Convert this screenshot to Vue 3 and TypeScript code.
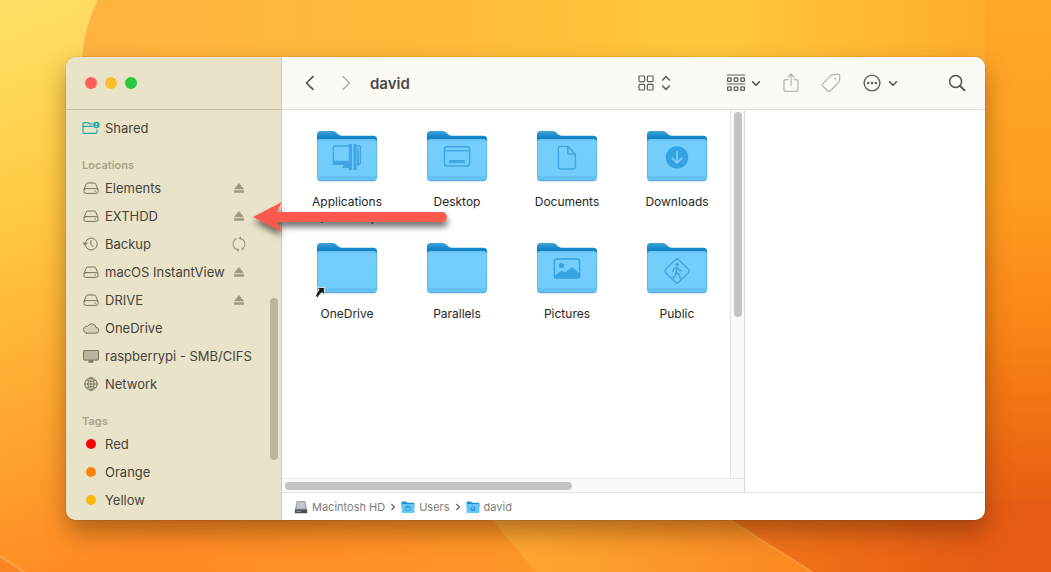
<script setup lang="ts">
interface Place {
  name: string
  icon: 'drive' | 'clock' | 'cloud' | 'display' | 'globe'
  action?: 'eject' | 'sync'
}
interface Tag {
  name: string
  tone: string
}
interface Folder {
  name: string
  note?: string
  glyph: string
}
interface Crumb {
  name: string
  icon: 'disk' | 'users' | 'home'
}

const places: Place[] = [
  { name: 'Elements', icon: 'drive', action: 'eject' },
  { name: 'EXTHDD', icon: 'drive', action: 'eject' },
  { name: 'Backup', icon: 'clock', action: 'sync' },
  { name: 'macOS InstantView', icon: 'drive', action: 'eject' },
  { name: 'DRIVE', icon: 'drive', action: 'eject' },
  { name: 'OneDrive', icon: 'cloud' },
  { name: 'raspberrypi - SMB/CIFS', icon: 'display' },
  { name: 'Network', icon: 'globe' },
]

const tags: Tag[] = [
  { name: 'Red', tone: 'red' },
  { name: 'Orange', tone: 'orange' },
  { name: 'Yellow', tone: 'yellow' },
]

const folders: Folder[] = [
  { name: 'Applications', note: '(Parallels)', glyph: 'apps' },
  { name: 'Desktop', glyph: 'desktop' },
  { name: 'Documents', glyph: 'document' },
  { name: 'Downloads', glyph: 'download' },
  { name: 'OneDrive', glyph: 'alias' },
  { name: 'Parallels', glyph: 'plain' },
  { name: 'Pictures', glyph: 'picture' },
  { name: 'Public', glyph: 'public' },
]

const crumbs: Crumb[] = [
  { name: 'Macintosh HD', icon: 'disk' },
  { name: 'Users', icon: 'users' },
  { name: 'david', icon: 'home' },
]
</script>

<template>
  <div class="screen">
    <svg class="wallpaper" viewBox="0 0 1051 572" preserveAspectRatio="none" aria-hidden="true">
      <defs>
        <linearGradient id="wp-left" x1="0" y1="0" x2="0.25" y2="1">
          <stop offset="0" stop-color="#ffe168" />
          <stop offset="0.35" stop-color="#ffcb43" />
          <stop offset="0.7" stop-color="#ffa730" />
          <stop offset="1" stop-color="#ff8a24" />
        </linearGradient>
        <linearGradient id="wp-inner" x1="0" y1="0" x2="1" y2="0">
          <stop offset="0" stop-color="#ffb142" />
          <stop offset="0.4" stop-color="#ffba39" />
          <stop offset="0.68" stop-color="#ffc83c" />
          <stop offset="1" stop-color="#ffa628" />
        </linearGradient>
        <linearGradient id="wp-right" x1="0" y1="0" x2="0" y2="1">
          <stop offset="0" stop-color="#ffa829" />
          <stop offset="0.35" stop-color="#ff9d20" />
          <stop offset="0.6" stop-color="#f88215" />
          <stop offset="0.85" stop-color="#e96114" />
          <stop offset="1" stop-color="#e55b14" />
        </linearGradient>
        <linearGradient id="wp-floor" x1="0" y1="0" x2="1" y2="0">
          <stop offset="0" stop-color="#ff8d25" stop-opacity="0" />
          <stop offset="0.3" stop-color="#ff8d25" />
          <stop offset="1" stop-color="#ff9729" />
        </linearGradient>
        <linearGradient id="wp-band" x1="0" y1="0" x2="1" y2="0">
          <stop offset="0" stop-color="#ffab34" />
          <stop offset="1" stop-color="#fb8822" />
        </linearGradient>
        <linearGradient id="wp-deep" x1="0" y1="0" x2="1" y2="0">
          <stop offset="0" stop-color="#f57c1c" />
          <stop offset="0.8" stop-color="#e65c14" />
          <stop offset="1" stop-color="#e65c14" />
        </linearGradient>
      </defs>
      <rect width="1051" height="572" fill="url(#wp-inner)" />
      <path d="M0 0H97C84 26 80 48 81 80C82 200 120 390 370 572H0Z" fill="url(#wp-left)" />
      <path d="M97 0C84 26 80 48 81 80" fill="none" stroke="#ffd36a" stroke-width="2" />
      <rect x="985" width="66" height="572" fill="url(#wp-right)" />
      <path d="M66 500H480L540 572H66Z" fill="url(#wp-floor)" />
      <path d="M475 500H710L812 572H536Z" fill="url(#wp-band)" />
      <path d="M698 500H1051V572H812Z" fill="url(#wp-deep)" />
      <path d="M698 500L812 572" stroke="#fb9a38" stroke-width="2" />
      <path d="M0 556L24 572H0Z" fill="#f98424" />
      <path d="M0 556L24 572" stroke="#ffa94e" stroke-width="2" />
    </svg>

    <main class="window">
      <aside class="sidebar">
        <div class="lights">
          <button class="light close" aria-label="Close"></button>
          <button class="light minimize" aria-label="Minimize"></button>
          <button class="light zoom" aria-label="Zoom"></button>
        </div>
        <nav class="places" aria-label="Sidebar">
          <a class="place" href="#shared">
            <svg class="place-icon" viewBox="0 0 18 16" fill="none" stroke="#1fa9a4" stroke-width="1.2">
              <path d="M11 4H7.4L6.2 2.6H2.2Q1 2.6 1 3.8V12Q1 13.4 2.4 13.4H13.6Q15 13.4 15 12V9.6M1 6.4H10.8" />
              <circle cx="14.4" cy="5" r="3.2" fill="#1fa9a4" stroke="none" />
              <circle cx="14.4" cy="4.2" r="1" fill="#e9e3ca" stroke="none" />
              <path d="M12.8 7Q14.4 4.9 16 7Z" fill="#e9e3ca" stroke="none" />
            </svg>
            <span>Shared</span>
          </a>
          <h2 class="heading">Locations</h2>
          <div v-for="place in places" :key="place.name" class="row">
            <a class="place" :href="'#' + place.icon">
              <svg class="place-icon" viewBox="0 0 18 16" fill="none" stroke="#77735f" stroke-width="1" stroke-linejoin="round" stroke-linecap="round">
                <template v-if="place.icon === 'drive'">
                  <path d="M2 9.4L4.3 4Q4.7 3 5.8 3H12.2Q13.3 3 13.7 4L16 9.4" />
                  <rect x="2" y="8.6" width="14" height="4.8" rx="1.8" />
                  <path d="M12.8 11H13.6" stroke-width="1.2" />
                </template>
                <template v-else-if="place.icon === 'clock'">
                  <path d="M3.4 9.6A6 6 0 1 0 3.5 6.1" />
                  <path d="M1.2 7.2L3.2 9.4L5.1 7.2Z" fill="#77735f" stroke-width="0.6" />
                  <path d="M9 4.6V8.4L11 10.6" />
                </template>
                <path v-else-if="place.icon === 'cloud'" d="M4.6 13.2H13.6A2.9 2.9 0 0 0 14 7.4A4.4 4.4 0 0 0 5.8 6.2A3.5 3.5 0 0 0 4.6 13.2Z" fill="#d5cfb8" />
                <template v-else-if="place.icon === 'display'">
                  <rect x="1.5" y="2.5" width="15" height="9.6" rx="0.8" fill="#b9b49f" />
                  <path d="M7 12.4H11V14.4H7Z" fill="#77735f" stroke-width="0.6" />
                </template>
                <template v-else>
                  <circle cx="9" cy="8" r="6.2" />
                  <ellipse cx="9" cy="8" rx="3" ry="6.2" />
                  <path d="M9 1.8V14.2M2.8 8H15.2M4.2 4.4Q9 7 13.8 4.4M4.2 11.6Q9 9 13.8 11.6" stroke-width="0.9" />
                </template>
              </svg>
              <span>{{ place.name }}</span>
            </a>
            <button v-if="place.action" class="action" :aria-label="place.action + ' ' + place.name">
              <svg v-if="place.action === 'eject'" viewBox="0 0 16 16" fill="#9f9a7e">
                <path d="M8 3L13 9.2H3Z" />
                <rect x="3" y="10.2" width="10" height="2.6" rx="0.3" />
              </svg>
              <svg v-else viewBox="0 0 16 16" fill="none" stroke="#9f9a7e" stroke-width="1.1">
                <path d="M6.6 13.8A6 6 0 0 1 4.2 3.4M9.4 2.2A6 6 0 0 1 11.8 12.6" />
                <path d="M6.2 12L8.6 14L6 15.8ZM9.8 4L7.4 2L10 0.2Z" fill="#9f9a7e" stroke="none" />
                <path d="M3 2.6L5.6 2.2L5 4.8ZM13 13.4L10.4 13.8L11 11.2Z" fill="#9f9a7e" stroke="none" />
              </svg>
            </button>
          </div>
          <h2 class="heading">Tags</h2>
          <a v-for="tag in tags" :key="tag.name" class="place" :href="'#' + tag.tone">
            <span class="dot" :class="tag.tone"></span>
            <span>{{ tag.name }}</span>
          </a>
        </nav>
        <div class="side-thumb"></div>
      </aside>

      <section class="content">
        <header class="toolbar">
          <button class="tool" aria-label="Back">
            <svg class="i16" viewBox="0 0 16 18" fill="none" stroke="#4d4b48" stroke-width="1.5" stroke-linecap="round" stroke-linejoin="round"><path d="M11 2.6L4.4 9L11 15.4" /></svg>
          </button>
          <button class="tool forward" aria-label="Forward">
            <svg class="i16" viewBox="0 0 16 18" fill="none" stroke="#b7b4b0" stroke-width="1.5" stroke-linecap="round" stroke-linejoin="round"><path d="M5 2.6L11.6 9L5 15.4" /></svg>
          </button>
          <h1 class="title">david</h1>
          <button class="tool view" aria-label="View as icons">
            <svg class="i16" viewBox="0 0 16 18" fill="none" stroke="#63605c" stroke-width="1.2">
              <rect x="1" y="2" width="5.6" height="5.6" rx="0.8" /><rect x="9.4" y="2" width="5.6" height="5.6" rx="0.8" />
              <rect x="1" y="10.4" width="5.6" height="5.6" rx="0.8" /><rect x="9.4" y="10.4" width="5.6" height="5.6" rx="0.8" />
            </svg>
            <svg class="i10" viewBox="0 0 10 18" fill="none" stroke="#63605c" stroke-width="1.6" stroke-linecap="round" stroke-linejoin="round"><path d="M1.6 6L5 2.6L8.4 6M1.6 12L5 15.4L8.4 12" /></svg>
          </button>
          <button class="tool group" aria-label="Group items">
            <svg class="i20" viewBox="0 0 20 18" fill="none" stroke="#63605c" stroke-width="1.3">
              <path d="M1 1H19M1 10H19" stroke-width="1.2" />
              <rect x="1.6" y="3.8" width="3.6" height="3.6" rx="0.6" /><rect x="8.2" y="3.8" width="3.6" height="3.6" rx="0.6" /><rect x="14.8" y="3.8" width="3.6" height="3.6" rx="0.6" />
              <rect x="1.6" y="12.8" width="3.6" height="3.6" rx="0.6" /><rect x="8.2" y="12.8" width="3.6" height="3.6" rx="0.6" /><rect x="14.8" y="12.8" width="3.6" height="3.6" rx="0.6" />
            </svg>
            <svg class="i10" viewBox="0 0 10 18" fill="none" stroke="#56534f" stroke-width="1.6" stroke-linecap="round" stroke-linejoin="round"><path d="M1.6 7.8L5 11.2L8.4 7.8" /></svg>
          </button>
          <button class="tool share" aria-label="Share">
            <svg class="i16" viewBox="0 0 16 20" fill="none" stroke="#bab7b3" stroke-width="1.3" stroke-linecap="round" stroke-linejoin="round"><path d="M5 6.6H2.4Q1 6.6 1 8V17Q1 18.4 2.4 18.4H13.6Q15 18.4 15 17V8Q15 6.6 13.6 6.6H11M8 12.6V1M5 4L8 1L11 4" /></svg>
          </button>
          <button class="tool tag" aria-label="Edit tags">
            <svg class="i20" viewBox="0 0 20 20" fill="none" stroke="#bab7b3" stroke-width="1.3" stroke-linejoin="round">
              <path d="M11.4 2L16.6 1.2Q18.6 1 18.7 3L18.6 7.4Q18.5 8.6 17.7 9.4L9.2 18Q8 19.2 6.8 18L1.9 13Q0.7 11.8 1.9 10.6L9.6 2.9Q10.4 2.1 11.4 2Z" />
              <circle cx="14.4" cy="5.8" r="1" fill="#bab7b3" stroke="none" />
            </svg>
          </button>
          <button class="tool more" aria-label="More actions">
            <svg class="i18" viewBox="0 0 18 18" fill="none" stroke="#63605c" stroke-width="1.4">
              <circle cx="9" cy="9" r="7.9" />
              <g fill="#56534f" stroke="none"><circle cx="5.2" cy="9" r="1.2" /><circle cx="9" cy="9" r="1.2" /><circle cx="12.8" cy="9" r="1.2" /></g>
            </svg>
            <svg class="i10" viewBox="0 0 10 18" fill="none" stroke="#56534f" stroke-width="1.6" stroke-linecap="round" stroke-linejoin="round"><path d="M1.6 7.8L5 11.2L8.4 7.8" /></svg>
          </button>
          <button class="tool search" aria-label="Search">
            <svg class="i18" viewBox="0 0 18 18" fill="none" stroke="#56534f" stroke-width="1.5" stroke-linecap="round"><circle cx="7.6" cy="7.4" r="6" /><path d="M12.2 12L16.6 16.4" stroke-width="1.9" /></svg>
          </button>
        </header>

        <div class="columns">
          <div class="browser">
            <div class="files">
              <a v-for="(folder, index) in folders" :key="index" class="folder" href="#folder">
                <svg class="folder-art" viewBox="0 0 64 56">
                  <defs>
                    <linearGradient :id="'back' + index" x1="0" y1="0" x2="0" y2="1">
                      <stop offset="0" stop-color="#3fa5dc" />
                      <stop offset="0.35" stop-color="#0f83c4" />
                    </linearGradient>
                    <linearGradient :id="'front' + index" x1="0" y1="0" x2="0" y2="1">
                      <stop offset="0" stop-color="#6ac5f7" />
                      <stop offset="0.1" stop-color="#74cffc" />
                      <stop offset="0.88" stop-color="#72cdfb" />
                      <stop offset="0.9" stop-color="#5fbdf0" />
                      <stop offset="0.96" stop-color="#68c4f4" />
                      <stop offset="1" stop-color="#4ba6da" />
                    </linearGradient>
                  </defs>
                  <path d="M2.5 48V12H61.5V48Q61.5 51.6 58 51.6H6Q2.5 51.6 2.5 48Z" fill="#9eb3c0" opacity="0.6" />
                  <path d="M2 14V4.6Q2 1 5.6 1H17.4Q19.6 1 21.2 2.4L23.4 4.4Q25 5.8 27.4 5.8H58.4Q62 5.8 62 9.4V20H2Z" :fill="`url(#back${index})`" />
                  <path d="M2 12.6Q2 9 5.6 9H58.4Q62 9 62 12.6V47.4Q62 51 58.4 51H5.6Q2 51 2 47.4Z" :fill="`url(#front${index})`" />
                  <path d="M2.5 12V47.4M61.5 12V47.4" stroke="#55b5eb" opacity="0.7" />
                  <g v-if="folder.glyph === 'apps'" fill="none" stroke="#41a6e1" stroke-width="1.4">
                    <path d="M34 34H19.4Q18.4 34 18.4 33V17Q18.4 16 19.4 16H34M41 16H44.4Q45.4 16 45.4 17V33Q45.4 34 44.4 34H42" />
                    <path d="M18.4 31.4H34V34H18.4Z" fill="#41a6e1" />
                    <path d="M29.5 34L27 38H37V34Z" fill="#41a6e1" stroke="none" />
                    <path d="M35.4 14V40M40 14V40" stroke-width="3.2" />
                    <path d="M43 18V36" stroke-width="1.6" />
                  </g>
                  <g v-else-if="folder.glyph === 'desktop'" fill="none" stroke="#41a6e1" stroke-width="1.4">
                    <rect x="19.4" y="16.8" width="25.2" height="19.2" rx="2.4" />
                    <path d="M19.4 20.8H44.6" />
                    <path d="M24 31.6H40" stroke-width="3" />
                  </g>
                  <g v-else-if="folder.glyph === 'document'" fill="none" stroke="#41a6e1" stroke-width="1.4" stroke-linejoin="round">
                    <path d="M25.4 16.4H32.8L40.4 24V36.8Q40.4 39 38.2 39H25.4Q23.4 39 23.4 36.8V18.4Q23.4 16.4 25.4 16.4Z" />
                    <path d="M32.8 16.4V22.4Q32.8 24 34.4 24H40.4" />
                  </g>
                  <g v-else-if="folder.glyph === 'download'">
                    <circle cx="32" cy="27.4" r="11.2" fill="#35a2e1" />
                    <path d="M32 21.6V32.6M27.4 28.4L32 33L36.6 28.4" fill="none" stroke="#83d3fa" stroke-width="1.5" stroke-linecap="round" />
                  </g>
                  <g v-else-if="folder.glyph === 'picture'">
                    <rect x="19.4" y="17" width="25.2" height="19" rx="2.2" fill="none" stroke="#35a2e1" stroke-width="1.4" />
                    <circle cx="26.6" cy="23.6" r="2.6" fill="#35a2e1" />
                    <path d="M20 33.4L27 28.4L30 30.4L37 25L44.4 31.6V35.6H20Z" fill="#35a2e1" />
                  </g>
                  <g v-else-if="folder.glyph === 'public'" fill="none" stroke="#41a6e1" stroke-width="1.4" stroke-linecap="round" stroke-linejoin="round">
                    <path d="M30.6 17.4Q32 16.2 33.4 17.4L43.6 27.6Q44.8 29 43.6 30.4L33.4 40.6Q32 41.8 30.6 40.6L20.4 30.4Q19.2 29 20.4 27.6Z" />
                    <circle cx="32.2" cy="22.6" r="1.4" fill="#41a6e1" stroke-width="0.6" />
                    <path d="M32 25.4L31.2 30L34.2 32.6L35.4 36.2M31.2 30L30.4 33.2L28 36.2M31.8 25.4L28.8 26.8L28 29.4M32.4 25.6L34.2 28.2L36.6 28.8" />
                  </g>
                  <g v-else-if="folder.glyph === 'alias'">
                    <path d="M2 45.4H9.4V52.8L7 50.6Q4 52.6 2.8 55.6L0.6 54.2Q1.6 50.2 4.2 47.8Z" fill="#171717" stroke="#fff" stroke-width="0.8" />
                  </g>
                </svg>
                <span class="label">{{ folder.name }}<br v-if="folder.note" />{{ folder.note }}</span>
              </a>
            </div>
            <div class="v-track"><div class="v-thumb"></div></div>
            <div class="h-track"><div class="h-thumb"></div></div>
          </div>
          <div class="preview"></div>
        </div>

        <footer class="pathbar">
          <template v-for="(crumb, index) in crumbs" :key="crumb.name">
            <svg v-if="index > 0" class="sep" viewBox="0 0 6 8" fill="none" stroke="#6f6f6f" stroke-width="1.4"><path d="M1.4 1L4.4 4L1.4 7" /></svg>
            <a class="crumb" href="#path">
              <svg class="crumb-icon" viewBox="0 0 14 14">
                <template v-if="crumb.icon === 'disk'">
                  <path d="M2.6 1H11.4L13.2 10H0.8Z" fill="#a2a9ad" />
                  <path d="M3.6 2H10.4L11.2 8.4H2.8Z" fill="#c0c8cd" />
                  <rect x="0.8" y="9.6" width="12.4" height="3.6" rx="0.8" fill="#4c4f52" />
                  <path d="M2.4 11.4H7" stroke="#8f9598" />
                </template>
                <template v-else>
                  <path d="M0.6 2.4Q0.6 1.6 1.4 1.6H5L6.2 2.8H12.6Q13.4 2.8 13.4 3.6V7H0.6Z" fill="#1d8fce" />
                  <rect x="0.6" y="4" width="12.8" height="9" rx="0.8" fill="#66c6f7" />
                  <g v-if="crumb.icon === 'users'" fill="none" stroke="#2e95d2" stroke-width="0.9"><circle cx="7" cy="8.2" r="2.5" /><circle cx="7" cy="7.6" r="0.6" /></g>
                  <path v-else d="M4.6 8.2L7 6L9.4 8.2M5.4 8V10.6H6.4V9H7.6V10.6H8.6V8" fill="none" stroke="#2e95d2" stroke-width="0.9" />
                </template>
              </svg>
              <span>{{ crumb.name }}</span>
            </a>
          </template>
        </footer>
      </section>

      <svg class="pointer" viewBox="0 0 206 44" aria-hidden="true">
        <path d="M2 18L31 3Q28 8 26 13H191A5 5 0 0 1 191 23H26Q28 28 31 33Z" fill="#fb5a4d" />
      </svg>
    </main>
  </div>
</template>

<style>
html,
body,
#app {
  height: 100%;
}
</style>

<style scoped>
.screen {
  position: relative;
  display: flex;
  box-sizing: border-box;
  min-height: 100%;
  padding: 57px 66px 52px;
  overflow: hidden;
  font-family: Inter, "Liberation Sans", sans-serif;
  font-size: 13px;
  color: #46433a;
}
.wallpaper {
  position: absolute;
  inset: 0;
  width: 100%;
  height: 100%;
}
.window {
  position: relative;
  display: flex;
  flex: 1;
  min-width: 0;
  border-radius: 10px;
  background: #fff;
  box-shadow: 0 0 1px rgba(70, 40, 0, 0.7), 0 12px 24px rgba(70, 30, 0, 0.42);
}
a {
  color: inherit;
  text-decoration: none;
}
button {
  padding: 0;
  border: 0;
  background: none;
  font: inherit;
}
svg {
  display: block;
}
.sidebar {
  position: relative;
  flex: 0 0 216px;
  box-sizing: border-box;
  min-width: 0;
  border-right: 1px solid #d3ccb2;
  border-radius: 10px 0 0 10px;
  background: #e9e3ca;
}
.lights {
  display: flex;
  align-items: center;
  gap: 8px;
  height: 52px;
  padding-left: 19px;
  border-bottom: 1px solid #cbc5ae;
}
.light {
  width: 12px;
  height: 12px;
  border-radius: 50%;
}
.close {
  background: #ff5f57;
}
.minimize {
  background: #febc2e;
}
.zoom {
  background: #28c840;
}
.places {
  padding: 4px 20px 6px 16px;
}
.row {
  display: flex;
  align-items: center;
  justify-content: space-between;
  padding-right: 14px;
}
.place {
  display: flex;
  align-items: center;
  gap: 5px;
  height: 28px;
  white-space: nowrap;
}
.place-icon {
  flex: none;
  width: 18px;
  height: 16px;
}
.heading {
  margin: 0;
  padding-top: 14px;
  font-size: 11px;
  font-weight: 600;
  line-height: 18px;
  color: #aaa487;
}
.action svg {
  width: 16px;
  height: 16px;
}
.dot {
  width: 10px;
  height: 10px;
  margin: 0 4px;
  border-radius: 50%;
}
.red {
  background: #fb0007;
}
.orange {
  background: #fd8208;
}
.yellow {
  background: #f5b90c;
}
.side-thumb {
  position: absolute;
  right: 3px;
  bottom: 60px;
  width: 8px;
  height: 35%;
  border-radius: 4px;
  background: #bbb5a0;
}
.content {
  display: flex;
  flex: 1;
  flex-direction: column;
  min-width: 0;
}
.toolbar {
  display: flex;
  align-items: center;
  height: 52px;
  padding: 0 19px 0 20px;
  border-bottom: 1px solid #e3e0dd;
  border-radius: 0 10px 0 0;
  background: #fdf9f4;
}
.tool {
  display: flex;
  align-items: center;
}
.forward {
  margin-left: 20px;
}
.title {
  flex: 1;
  margin: 0 0 0 16px;
  font-size: 15px;
  font-weight: 600;
  color: #4a4846;
}
.view,
.more {
  gap: 7px;
}
.group {
  gap: 5px;
  margin-left: 55px;
}
.share,
.tag,
.more {
  margin-left: 22px;
}
.search {
  margin-left: 50px;
}
.i10 {
  width: 10px;
  height: 18px;
}
.i16 {
  width: 16px;
}
.i18 {
  width: 18px;
}
.i20 {
  width: 20px;
}
.columns {
  display: flex;
  flex: 1;
}
.browser {
  display: grid;
  flex: 0 0 463px;
  grid-template-rows: 1fr 14px;
  grid-template-columns: minmax(0, 1fr) 14px;
  box-sizing: border-box;
  min-width: 0;
  border-right: 1px solid #d9d9d9;
}
.files {
  display: grid;
  grid-template-columns: repeat(4, 110px);
  grid-auto-rows: 112px;
  align-content: start;
  padding: 20px 0 0 10px;
}
.folder {
  display: flex;
  flex-direction: column;
  align-items: center;
  gap: 8px;
}
.folder-art {
  width: 64px;
  height: 56px;
}
.label {
  font-size: 12px;
  line-height: 16px;
  text-align: center;
  color: #262626;
}
.v-track {
  padding: 2px 2px 0;
  border-left: 1px solid #e6e6e6;
  background: #fafafa;
}
.v-thumb {
  width: 8px;
  height: 56%;
  margin: 0 auto;
  border-radius: 4px;
  background: #c4c4c4;
}
.h-track {
  grid-column: 1 / -1;
  padding: 3px;
  border-top: 1px solid #e6e6e6;
  background: #fafafa;
}
.h-thumb {
  width: 63%;
  height: 8px;
  border-radius: 4px;
  background: #c4c4c4;
}
.preview {
  flex: 1;
}
.pathbar {
  display: flex;
  align-items: center;
  gap: 5px;
  height: 27px;
  padding-left: 12px;
  border-top: 1px solid #e3e3e3;
  font-size: 11px;
  color: #7d7d7d;
}
.crumb {
  display: flex;
  align-items: center;
  gap: 4px;
}
.crumb-icon {
  width: 14px;
  height: 14px;
}
.sep {
  width: 6px;
  height: 8px;
}
.pointer {
  position: absolute;
  top: 142px;
  left: 185px;
  width: 206px;
  height: 44px;
  overflow: visible;
  filter: drop-shadow(1px 5px 3px rgba(0, 0, 0, 0.55));
}
</style>
